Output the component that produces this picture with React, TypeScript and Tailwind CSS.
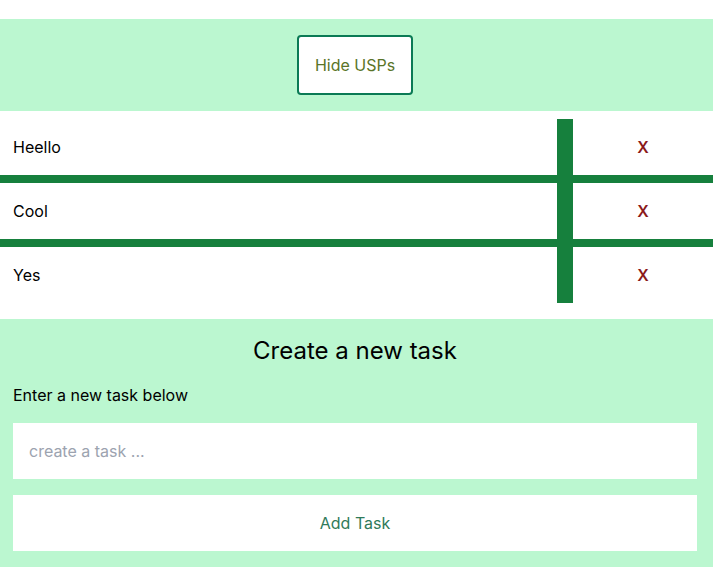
import React from "react";

const tasks = ["Heello", "Cool", "Yes"];

export default function App() {
  return (
    <div className="w-[713px] pt-[19px] bg-white text-black" style={{ fontFamily: "Inter, 'Noto Sans', sans-serif" }}>
      <div className="h-[92px] bg-[#bbf7d0] pl-[13px] pr-[16px] flex items-center justify-center">
        <button className="w-[116px] h-[60px] bg-white border-2 border-[#0b7a55] rounded-[4px] text-base text-[#5a7428]">
          Hide USPs
        </button>
      </div>
      <div className="bg-white pt-2 pb-4">
        {tasks.map((t, i) => (
          <div key={t} className={i > 0 ? "border-t-8 border-[#16803d]" : ""}>
            <div className="flex h-14 items-center">
              <div className="flex-1 pl-[13px] text-base">{t}</div>
              <div className="w-4 h-full bg-[#16803d]" />
              <div className="w-[140px] text-center text-base font-semibold text-[#8b1a1a]">X</div>
            </div>
          </div>
        ))}
      </div>
      <div className="bg-[#bbf7d0] pl-[13px] pr-[16px] pt-4 pb-4 flex flex-col">
        <h2 className="text-2xl leading-8 text-center">Create a new task</h2>
        <p className="mt-4 text-base leading-6">Enter a new task below</p>
        <input
          className="mt-4 h-14 bg-white px-4 text-base outline-none placeholder:text-[#9ca3af]"
          placeholder="create a task ..."
        />
        <button className="mt-4 h-14 bg-white text-base text-[#2f7a5a]">Add Task</button>
      </div>
    </div>
  );
}
